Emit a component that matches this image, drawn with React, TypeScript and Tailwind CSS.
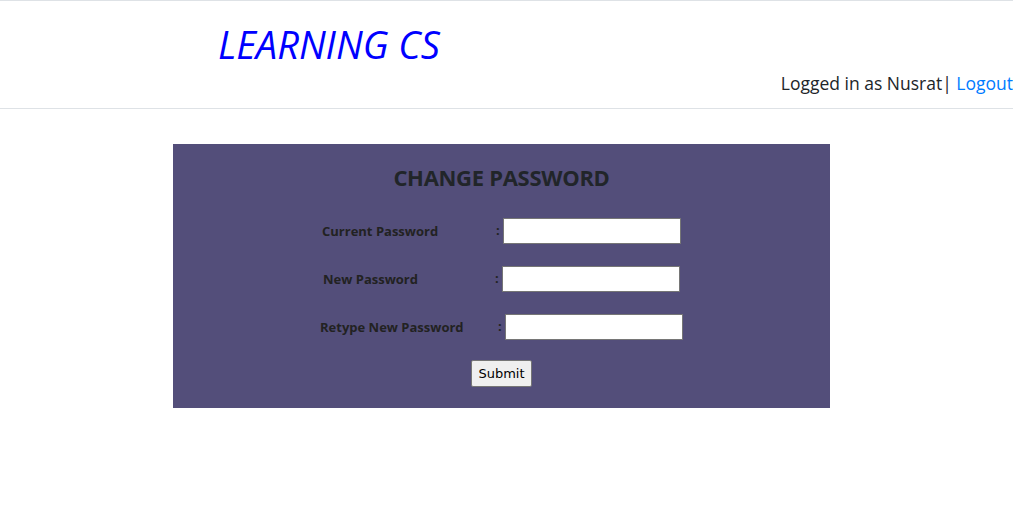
import React from 'react'

const rows = [
    { label: 'Current Password', ml: 'ml-[149px]', labelW: 'w-[174px]' },
    { label: 'New Password', ml: 'ml-[150px]', labelW: 'w-[172px]' },
    { label: 'Retype New Password', ml: 'ml-[147px]', labelW: 'w-[178px]' },
]

const App = () => {
    return (
        <div className="min-h-screen bg-white text-[#212529] font-['Open_Sans',sans-serif]">
            <header className="h-[109px] border-t border-b border-[#dee2e6] flex">
                <div className="pl-[218px] pt-[19px]">
                    <h1 className="text-[38px] italic text-[#0000ff] leading-[48px]">LEARNING CS</h1>
                </div>
                <div className="ml-auto pt-[69px] text-[17.5px] leading-[26px]">
                    Logged in as Nusrat| <a href="#" className="text-[#007bff]">Logout</a>
                </div>
            </header>

            <main className="pt-[35px] pl-[173px]">
                <div className="w-[657px] h-[264px] bg-[#534e7a] pt-[18px] flex flex-col">
                    <h2 className="self-center text-[22px] font-bold leading-[30px] tracking-[-0.3px] text-[#212529]">CHANGE PASSWORD</h2>

                    <form className="mt-[26px] flex flex-col gap-[22px]">
                        {rows.map((r) => (
                            <div key={r.label} className={`flex items-center ${r.ml}`}>
                                <label className={`${r.labelW} text-[13px] font-bold text-[#222] leading-[26px]`}>{r.label}</label>
                                <span className="text-[13px] font-bold text-[#222] w-[7px]">:</span>
                                <input
                                    type="password"
                                    className="w-[178px] h-[26px] bg-white border border-[#767676] outline-none"
                                />
                            </div>
                        ))}
                        <button
                            type="button"
                            className="self-center -mt-[2px] h-[27px] px-[6px] text-[13px] text-black bg-[#efefef] border border-[#767676] rounded-[2px] font-['DejaVu_Sans','Liberation_Sans',sans-serif]"
                        >
                            Submit
                        </button>
                    </form>
                </div>
            </main>
        </div>
    )
}

export default App
